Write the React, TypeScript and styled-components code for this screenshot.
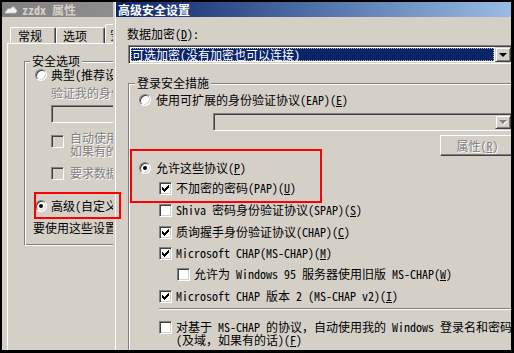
import React from "react";
import styled, { createGlobalStyle } from "styled-components";

const FONT = `"Noto Sans Mono CJK SC", "Noto Sans CJK SC", "DejaVu Sans Mono", monospace`;
const FACE = "#d4d0c8";

const GlobalStyle = createGlobalStyle`
  html, body { margin: 0; padding: 0; background: #fff; }
`;

const Screen = styled.div`
  position: relative;
  box-sizing: border-box;
  width: 514px;
  height: 353px;
  border-style: solid;
  border-color: #000;
  border-width: 2px 3px 3px 2px;
  display: flex;
  overflow: hidden;
  background: ${FACE};
  color: #000;
  font-family: ${FONT};
  font-size: 12px;
  line-height: 12px;
  white-space: nowrap;
`;

/* ---------- windows ---------- */
const LeftWindow = styled.div`
  flex: 0 0 111px;
  display: flex;
  flex-direction: column;
  overflow: hidden;
`;

const RightWindow = styled.div`
  flex: 1 1 auto;
  display: flex;
  overflow: hidden;
  border-left: 2px solid ${FACE};
`;

const RightInner = styled.div`
  flex: 0 0 400px;
  display: flex;
  flex-direction: column;
  border-left: 1px solid #fff;
`;

const TitleBar = styled.div<{ $active?: boolean }>`
  flex: 0 0 15px;
  display: flex;
  align-items: center;
  gap: 4px;
  padding-left: ${(p) => (p.$active ? 2 : 2)}px;
  background: ${(p) =>
    p.$active
      ? "linear-gradient(to right, #0a246a, #a6caf0)"
      : "linear-gradient(to right, #808080, #8e8e8e)"};
  color: ${(p) => (p.$active ? "#fff" : FACE)};
  font-weight: bold;
`;

const TitleText = styled.span`
  flex: 1 1 auto;
  line-height: 12px;
`;

const HelpButton = styled.span`
  flex: 0 0 auto;
  box-sizing: border-box;
  width: 15px;
  height: 13px;
  margin-right: 4px;
  border: 1px solid;
  border-color: #fff #404040 #404040 #fff;
  box-shadow: inset -1px -1px 0 #808080;
  background: ${FACE};
  color: #000;
  font-family: "DejaVu Sans", sans-serif;
  font-weight: bold;
  font-size: 11px;
  line-height: 11px;
  display: flex;
  align-items: center;
  justify-content: center;
`;

const CloudIcon = () => (
  <svg width="14" height="10" viewBox="0 0 14 10">
    <path
      d="M2 8.5 C0.5 8.5 0.5 6 2.5 5.8 C2.5 3.5 5 2.5 6.5 3.6 C7.5 1.2 11 1.2 11.5 3.8 C13.5 4 13.6 7.5 11.5 8.2 Z"
      fill="#f0f0f0"
      stroke="#9a9a9a"
      strokeWidth="0.8"
    />
  </svg>
);

/* ---------- left window parts ---------- */
const LeftBody = styled.div`
  flex: 1 1 auto;
  display: flex;
  flex-direction: column;
  padding-left: 5px;
`;

const TabStrip = styled.div`
  flex: 0 0 26px;
  display: flex;
  align-items: flex-end;
  padding-left: 3px;
`;

const Tab = styled.div<{ $selected?: boolean; $w: number; $pad: number }>`
  box-sizing: border-box;
  flex: 0 0 ${(p) => p.$w}px;
  height: ${(p) => (p.$selected ? 19 : 16)}px;
  padding-left: ${(p) => p.$pad}px;
  padding-top: ${(p) => (p.$selected ? 4 : 2)}px;
  border-top: 1px solid #fff;
  border-left: 1px solid #fff;
  border-right: 1px solid #404040;
  box-shadow: inset -1px 0 0 #808080;
  border-radius: 2px 2px 0 0;
  line-height: 12px;
`;

const TabPanel = styled.div`
  flex: 1 1 auto;
  display: flex;
  flex-direction: column;
  border-left: 1px solid #fff;
  border-top: 1px solid #fff;
`;

/* ---------- group boxes ---------- */
const GroupBox = styled.fieldset<{ $top: number; $left: number }>`
  box-sizing: border-box;
  flex: 0 0 auto;
  width: 420px;
  min-width: 0;
  margin: ${(p) => p.$top}px 0 0 ${(p) => p.$left}px;
  padding: 0 0 10px 0;
  border: 1px solid;
  border-color: #808080 #fff #fff #808080;
  box-shadow: inset 1px 1px 0 #fff, inset -1px -1px 0 #808080;
`;

const Legend = styled.legend<{ $offset: number }>`
  margin-left: ${(p) => p.$offset}px;
  padding: 0 2px;
  height: 12px;
  line-height: 12px;
  background: ${FACE};
`;

const GroupContent = styled.div`
  display: flex;
  flex-direction: column;
  padding-left: 10px;
`;

/* ---------- controls ---------- */
const Row = styled.div<{
  $top: number;
  $indent?: number;
  $gap?: number;
  $h?: number;
  $align?: string;
}>`
  display: flex;
  align-items: ${(p) => p.$align ?? "center"};
  gap: ${(p) => p.$gap ?? 4}px;
  margin-top: ${(p) => p.$top}px;
  margin-left: ${(p) => p.$indent ?? 0}px;
  height: ${(p) => p.$h ?? 14}px;
`;

const Text = styled.span<{ $disabled?: boolean; $lh?: number }>`
  color: ${(p) => (p.$disabled ? "#808080" : "#000")};
  text-shadow: ${(p) => (p.$disabled ? "1px 1px 0 #fff" : "none")};
  line-height: ${(p) => p.$lh ?? 12}px;
`;

const U = styled.span`
  text-decoration: underline;
  text-underline-offset: 1px;
`;

const RadioBox = styled.span`
  flex: 0 0 12px;
  box-sizing: border-box;
  width: 12px;
  height: 12px;
  border-radius: 50%;
  border: 1px solid;
  border-color: #808080 #fff #fff #808080;
  box-shadow: inset 1px 1px 0 #404040, inset -1px -1px 0 ${FACE};
  background: #fff;
  display: flex;
  align-items: center;
  justify-content: center;
`;

const RadioDot = styled.span`
  width: 4px;
  height: 4px;
  border-radius: 50%;
  background: #000;
`;

const CheckBox = styled.span<{ $disabled?: boolean; $mt?: number }>`
  flex: 0 0 13px;
  box-sizing: border-box;
  width: 13px;
  height: 13px;
  margin-top: ${(p) => p.$mt ?? 0}px;
  border: 1px solid;
  border-color: #808080 #fff #fff #808080;
  box-shadow: inset 1px 1px 0 #404040, inset -1px -1px 0 ${FACE};
  background: ${(p) => (p.$disabled ? FACE : "#fff")};
  display: flex;
  align-items: center;
  justify-content: center;
`;

const CheckMark = () => (
  <svg width="7" height="7" viewBox="0 0 7 7" shapeRendering="crispEdges">
    <path
      d="M6 0h1v1h-1z M5 1h2v1h-2z M0 2h1v1h-1z M4 2h3v1h-3z M0 3h2v1h-2z M3 3h3v1h-3z M0 4h5v1h-5z M1 5h3v1h-3z M2 6h1v1h-1z"
      fill="#000"
    />
  </svg>
);

const Radio = ({ checked }: { checked?: boolean }) => (
  <RadioBox>{checked && <RadioDot />}</RadioBox>
);

const Check = ({
  checked,
  disabled,
  mt,
}: {
  checked?: boolean;
  disabled?: boolean;
  mt?: number;
}) => (
  <CheckBox $disabled={disabled} $mt={mt}>
    {checked && <CheckMark />}
  </CheckBox>
);

const TextBox = styled.div<{ $top: number; $indent: number }>`
  box-sizing: border-box;
  flex: 0 0 18px;
  width: 200px;
  margin: ${(p) => p.$top}px 0 0 ${(p) => p.$indent}px;
  border: 1px solid;
  border-color: #808080 #fff #fff #808080;
  box-shadow: inset 1px 1px 0 #404040, inset -1px -1px 0 ${FACE};
  background: ${FACE};
`;

const Combo = styled.div<{
  $disabled?: boolean;
  $top: number;
  $left: number;
  $w: number;
  $h: number;
}>`
  box-sizing: border-box;
  flex: 0 0 ${(p) => p.$h}px;
  width: ${(p) => p.$w}px;
  margin: ${(p) => p.$top}px 0 0 ${(p) => p.$left}px;
  padding: 1px;
  border: 1px solid;
  border-color: #808080 #fff #fff #808080;
  box-shadow: inset 1px 1px 0 #404040, inset -1px -1px 0 ${FACE};
  background: ${(p) => (p.$disabled ? FACE : "#fff")};
  display: flex;
`;

const ComboValue = styled.div`
  box-sizing: border-box;
  flex: 1 1 auto;
  margin: 1px 1px 0 1px;
  height: 13px;
  border: 1px dotted #b8b4ac;
  background: #0a246a;
  color: #fff;
  line-height: 11px;
  padding-left: 0;
`;

const ComboSpacer = styled.div`
  flex: 1 1 auto;
`;

const DropButton = styled.div`
  box-sizing: border-box;
  flex: 0 0 16px;
  height: 100%;
  border: 1px solid;
  border-color: ${FACE} #404040 #404040 ${FACE};
  box-shadow: inset 1px 1px 0 #fff, inset -1px -1px 0 #808080;
  background: ${FACE};
  display: flex;
  align-items: center;
  justify-content: center;
`;

const Arrow = styled.span<{ $disabled?: boolean }>`
  width: 0;
  height: 0;
  border-left: 4px solid transparent;
  border-right: 4px solid transparent;
  border-top: 4px solid ${(p) => (p.$disabled ? "#808080" : "#000")};
  filter: ${(p) => (p.$disabled ? "drop-shadow(1px 1px 0 #fff)" : "none")};
`;

const PushButton = styled.div<{ $top: number; $left: number }>`
  box-sizing: border-box;
  flex: 0 0 21px;
  width: 75px;
  margin: ${(p) => p.$top}px 0 0 ${(p) => p.$left}px;
  border: 1px solid;
  border-color: #fff #404040 #404040 #fff;
  box-shadow: inset -1px -1px 0 #808080;
  display: flex;
  align-items: center;
  justify-content: center;
`;

const RightBody = styled.div`
  flex: 1 1 auto;
  display: flex;
  flex-direction: column;
  padding: 11px 0 0 11px;
`;

const FieldLabel = styled.div`
  height: 12px;
  line-height: 12px;
`;

const Separator = styled.div<{ $top: number; $indent: number }>`
  flex: 0 0 auto;
  margin: ${(p) => p.$top}px 0 0 ${(p) => p.$indent}px;
  border-top: 1px solid #808080;
  border-bottom: 1px solid #fff;
`;

/* red annotation boxes drawn over the screenshot */
const Annotation = styled.div<{ $x: number; $y: number; $w: number; $h: number }>`
  position: absolute;
  box-sizing: border-box;
  left: ${(p) => p.$x}px;
  top: ${(p) => p.$y}px;
  width: ${(p) => p.$w}px;
  height: ${(p) => p.$h}px;
  border: 2px solid #ff0000;
  pointer-events: none;
`;

export default function App() {
  return (
    <>
      <GlobalStyle />
      <Screen>
        <LeftWindow>
          <TitleBar>
            <CloudIcon />
            <TitleText>zzdx 属性</TitleText>
          </TitleBar>
          <LeftBody>
            <TabStrip>
              <Tab $w={46} $pad={7}>常规</Tab>
              <Tab $w={49} $pad={6}>选项</Tab>
              <Tab $w={60} $pad={4} $selected>
                安全
              </Tab>
            </TabStrip>
            <TabPanel>
              <GroupBox $top={11} $left={16}>
                <Legend $offset={5}>安全选项</Legend>
                <GroupContent>
                  <Row $top={1}>
                    <Radio />
                    <Text>典型(推荐设置)(T)</Text>
                  </Row>
                  <Row $top={4} $indent={16}>
                    <Text $disabled>验证我的身份为(V):</Text>
                  </Row>
                  <TextBox $top={5} $indent={16} />
                  <Row $top={8} $indent={16} $h={26} $align="flex-start" $gap={6}>
                    <Check disabled mt={4} />
                    <Text $disabled $lh={13}>
                      自动使用我的 Windows 登录名和密码
                      <br />
                      如果有的话(及域)(A)
                    </Text>
                  </Row>
                  <Row $top={9} $indent={16} $gap={6}>
                    <Check disabled />
                    <Text $disabled>要求数据加密(没有就断开)(D)</Text>
                  </Row>
                  <Row $top={19}>
                    <Radio checked />
                    <Text>高级(自定义设置)(A)</Text>
                  </Row>
                  <Row $top={8} $indent={-2}>
                    <Text>要使用这些设置，请单击设置</Text>
                  </Row>
                </GroupContent>
              </GroupBox>
            </TabPanel>
          </LeftBody>
        </LeftWindow>

        <RightWindow>
          <RightInner>
            <TitleBar $active>
              <TitleText>高级安全设置</TitleText>
              <HelpButton>?</HelpButton>
            </TitleBar>
            <RightBody>
              <FieldLabel>
                数据加密(<U>D</U>):
              </FieldLabel>
              <Combo $top={5} $left={1} $w={385} $h={19}>
                <ComboValue>可选加密(没有加密也可以连接)</ComboValue>
                <DropButton>
                  <Arrow />
                </DropButton>
              </Combo>
              <GroupBox $top={13} $left={1}>
                <Legend $offset={6}>登录安全措施</Legend>
                <GroupContent>
                  <Row $top={4} $gap={5}>
                    <Radio />
                    <Text>
                      使用可扩展的身份验证协议(EAP)(<U>E</U>)
                    </Text>
                  </Row>
                  <Combo $disabled $top={6} $left={74} $w={300} $h={18}>
                    <ComboSpacer />
                    <DropButton>
                      <Arrow $disabled />
                    </DropButton>
                  </Combo>
                  <PushButton $top={4} $left={301}>
                    <Text $disabled>
                      属性(<U>R</U>)
                    </Text>
                  </PushButton>
                  <Row $top={5} $gap={5}>
                    <Radio checked />
                    <Text>
                      允许这些协议(<U>P</U>)
                    </Text>
                  </Row>
                  <Row $top={6} $indent={20}>
                    <Check checked />
                    <Text>
                      不加密的密码(PAP)(<U>U</U>)
                    </Text>
                  </Row>
                  <Row $top={8} $indent={20}>
                    <Check />
                    <Text>
                      Shiva 密码身份验证协议(SPAP)(<U>S</U>)
                    </Text>
                  </Row>
                  <Row $top={8} $indent={20}>
                    <Check checked />
                    <Text>
                      质询握手身份验证协议(CHAP)(<U>C</U>)
                    </Text>
                  </Row>
                  <Row $top={7} $indent={20}>
                    <Check checked />
                    <Text>
                      Microsoft CHAP(MS-CHAP)(<U>M</U>)
                    </Text>
                  </Row>
                  <Row $top={7} $indent={38}>
                    <Check />
                    <Text>
                      允许为 Windows 95 服务器使用旧版 MS-CHAP(<U>W</U>)
                    </Text>
                  </Row>
                  <Row $top={8} $indent={20}>
                    <Check checked />
                    <Text>
                      Microsoft CHAP 版本 2 (MS-CHAP v2)(<U>I</U>)
                    </Text>
                  </Row>
                  <Separator $top={5} $indent={20} />
                  <Row $top={10} $indent={20} $h={26} $align="flex-start">
                    <Check mt={1} />
                    <Text $lh={13}>
                      对基于 MS-CHAP 的协议，自动使用我的 Windows 登录名和密码
                      <br />
                      (及域，如果有的话)(<U>F</U>)
                    </Text>
                  </Row>
                </GroupContent>
              </GroupBox>
            </RightBody>
          </RightInner>
        </RightWindow>

        <Annotation $x={32} $y={190} $w={87} $h={27} />
        <Annotation $x={128} $y={147} $w={192} $h={54} />
      </Screen>
    </>
  );
}
